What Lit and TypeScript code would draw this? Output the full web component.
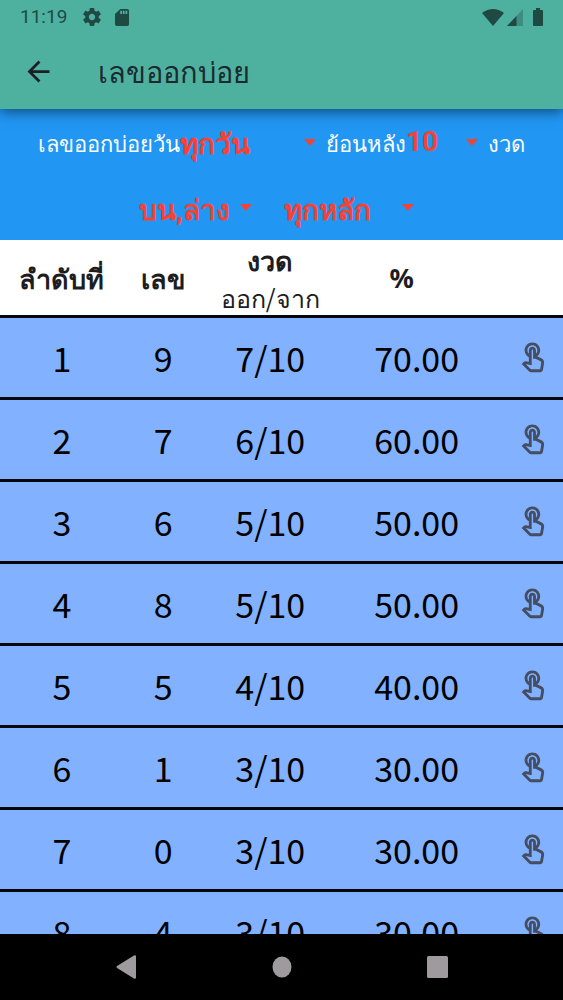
import { LitElement, html, css } from "lit";
import { customElement, property, state } from "lit/decorators.js";

interface Row {
  digit: number;
  hits: number;
  draws: number;
}

const ROWS: Row[] = [
  { digit: 9, hits: 7, draws: 10 },
  { digit: 7, hits: 6, draws: 10 },
  { digit: 6, hits: 5, draws: 10 },
  { digit: 8, hits: 5, draws: 10 },
  { digit: 5, hits: 4, draws: 10 },
  { digit: 1, hits: 3, draws: 10 },
  { digit: 0, hits: 3, draws: 10 },
  { digit: 4, hits: 3, draws: 10 },
];

@customElement("status-bar")
class StatusBar extends LitElement {
  static styles = css`
    :host {
      display: flex;
      align-items: center;
      height: 34px;
      padding: 0 20px;
      color: #1f4a44;
      font: 19px/24px Roboto, sans-serif;
    }
    .time {
      margin-right: 16px;
    }
    .left {
      margin-right: 14px;
    }
    .spacer {
      flex: 1;
    }
    svg {
      display: block;
      fill: currentColor;
    }
    .signal {
      margin: 0 10px 0 3px;
    }
  `;

  render() {
    return html`
      <span class="time">11:19</span>
      <svg class="left" width="18" height="18" viewBox="2 2 20 20" aria-hidden="true">
        <path d="M19.43 12.98c.04-.32.07-.64.07-.98s-.03-.66-.07-.98l2.11-1.65c.19-.15.24-.42.12-.64l-2-3.46c-.12-.22-.39-.3-.61-.22l-2.49 1c-.52-.4-1.08-.73-1.69-.98l-.38-2.65A.49.49 0 0 0 14 2h-4c-.25 0-.46.18-.49.42l-.38 2.65c-.61.25-1.17.59-1.69.98l-2.49-1c-.23-.09-.49 0-.61.22l-2 3.46c-.13.22-.07.49.12.64l2.11 1.65c-.04.32-.07.65-.07.98s.03.66.07.98l-2.11 1.65c-.19.15-.24.42-.12.64l2 3.46c.12.22.39.3.61.22l2.49-1c.52.4 1.08.73 1.69.98l.38 2.65c.03.24.24.42.49.42h4c.25 0 .46-.18.49-.42l.38-2.65c.61-.25 1.17-.59 1.69-.98l2.49 1c.23.09.49 0 .61-.22l2-3.46c.12-.22.07-.49-.12-.64l-2.11-1.65zM12 15.5c-1.93 0-3.5-1.57-3.5-3.5s1.57-3.5 3.5-3.5 3.5 1.57 3.5 3.5-1.57 3.5-3.5 3.5z" />
      </svg>
      <svg width="14" height="17" viewBox="4 2 16 20" preserveAspectRatio="none" aria-hidden="true">
        <path d="M18 2h-8L4.02 8 4 20c0 1.100.9 2 2 2h12c1.100 0 2-.9 2-2V4c0-1.100-.9-2-2-2zm-6 6h-2V4h2v4zm3 0h-2V4h2v4zm3 0h-2V4h2v4z" />
      </svg>
      <span class="spacer"></span>
      <svg width="22" height="17" viewBox="0 0 22 17" aria-hidden="true">
        <path d="M0 4Q11-4 22 4L11 17z" />
      </svg>
      <svg class="signal" width="16" height="17" viewBox="0 0 16 17" aria-hidden="true">
        <path d="M0 17 16 0v17z" opacity=".35" />
        <path d="M0 17 9.500 7v10z" />
      </svg>
      <svg width="10" height="18" viewBox="0 0 10 18" aria-hidden="true">
        <path d="M3 0h4v2h2q1 0 1 1v14q0 1-1 1H1q-1 0-1-1V3q0-1 1-1h2z" />
      </svg>
    `;
  }
}

@customElement("filter-select")
class FilterSelect extends LitElement {
  @property() label = "";
  @property() value = "";
  @property({ type: Array }) options: string[] = [];

  static styles = css`
    :host {
      display: flex;
      align-items: center;
      height: 66px;
    }
    .box {
      flex: 1;
      display: grid;
      grid-template-columns: minmax(0, 1fr) 22px;
      align-items: center;
    }
    select {
      grid-area: 1 / 1 / 2 / 3;
      appearance: none;
      width: 100%;
      height: 56px;
      margin: 0;
      padding: 0;
      border: 0;
      outline: 0;
      background: transparent;
      color: #f44336;
      font: bold 28px/40px Roboto, sans-serif;
      cursor: pointer;
    }
    select:lang(th) {
      padding-top: 6px;
    }
    .arrow {
      grid-area: 1 / 2 / 2 / 3;
      fill: #f44336;
      pointer-events: none;
    }
  `;

  private pick(e: Event) {
    this.value = (e.target as HTMLSelectElement).value;
  }

  render() {
    const lang = /^\d+$/.test(this.value) ? "en" : "th";
    return html`
      <div class="box">
        <select lang=${lang} aria-label=${this.label} @change=${this.pick}>
          ${this.options.map(
            (o) => html`<option ?selected=${o === this.value}>${o}</option>`
          )}
        </select>
        <svg class="arrow" width="12" height="7" viewBox="0 0 12 7" aria-hidden="true">
          <path d="M0 0h12L6 7z" />
        </svg>
      </div>
    `;
  }
}

@customElement("app-root")
class AppRoot extends LitElement {
  @state() private selected = -1;

  static styles = css`
    :host {
      display: flex;
      flex-direction: column;
      height: 100vh;
      overflow: hidden;
      background: #fff;
      color: #1d1d1f;
      font-family: "Noto Sans CJK SC", sans-serif;
    }
    .top {
      position: relative;
      z-index: 1;
      background: #4eb1a0;
      box-shadow: 0 3px 12px rgba(0, 0, 0, 0.5);
    }
    .appbar {
      display: flex;
      align-items: center;
      height: 75px;
      padding: 0 22px;
      gap: 43px;
    }
    .back {
      display: flex;
      margin: 0;
      padding: 0;
      border: 0;
      background: none;
      color: #1b1f26;
      cursor: pointer;
    }
    h1 {
      margin: 0;
      padding-bottom: 4px;
      color: #1b2a2e;
      font-size: 29px;
      line-height: 40px;
      font-weight: 400;
    }
    .filters {
      background: #2196f3;
      color: #fff;
      font-size: 22px;
      line-height: 32px;
    }
    .line {
      display: flex;
      justify-content: center;
      align-items: center;
      height: 66px;
      white-space: nowrap;
    }
    .line + .line {
      height: 65px;
      gap: 22px;
    }
    .day {
      width: 146px;
    }
    .count {
      width: 82px;
    }
    .place {
      width: 123px;
    }
    .digit {
      width: 140px;
    }
    .list {
      flex: 1;
      min-height: 0;
      overflow: hidden;
    }
    table {
      width: 100%;
      table-layout: fixed;
      border-collapse: collapse;
    }
    .c-rank {
      width: 22%;
    }
    .c-num {
      width: 14%;
    }
    .c-hits {
      width: 24%;
    }
    .c-go {
      width: 12%;
    }
    th,
    td {
      padding: 0;
      text-align: center;
      border-bottom: 3px solid #05070d;
    }
    th {
      height: 75px;
      font-size: 27px;
      line-height: 38px;
      font-weight: 700;
    }
    th.pct {
      padding-right: 30px;
      font-family: "Noto Sans", sans-serif;
    }
    .sub {
      display: block;
      font-size: 25px;
      line-height: 36px;
      font-weight: 400;
    }
    td {
      height: 79px;
      background: #82b1ff;
      color: #000;
      font-size: 34px;
      line-height: 48px;
    }
    .go {
      display: block;
      margin: 0 0 0 auto;
      padding: 0 13px 0 0;
      border: 0;
      background: none;
      color: #454d60;
      cursor: pointer;
    }
    .go svg {
      display: block;
      fill: currentColor;
    }
    .nav {
      display: flex;
      justify-content: center;
      align-items: center;
      gap: 124px;
      height: 66px;
      background: #000;
    }
    .nav button {
      display: flex;
      justify-content: center;
      width: 32px;
      margin: 0;
      padding: 0;
      border: 0;
      background: none;
      cursor: pointer;
    }
    .nav svg {
      display: block;
      fill: #9e9a9e;
    }
  `;

  render() {
    return html`
      <header class="top">
        <status-bar></status-bar>
        <div class="appbar">
          <button class="back" aria-label="ย้อนกลับ">
            <svg width="33" height="33" viewBox="0 0 24 24" fill="currentColor" aria-hidden="true">
              <path d="M20 11H7.830l5.590-5.590L12 4l-8 8 8 8 1.410-1.410L7.830 13H20v-2z" />
            </svg>
          </button>
          <h1>เลขออกบ่อย</h1>
        </div>
      </header>
      <section class="filters">
        <div class="line">
          <span>เลขออกบ่อยวัน</span>
          <filter-select class="day" label="วัน" value="ทุกวัน" .options=${["ทุกวัน", "จันทร์", "อังคาร", "พุธ"]}></filter-select>
          <span>ย้อนหลัง</span>
          <filter-select class="count" label="ย้อนหลัง" value="10" .options=${["10", "20", "30"]}></filter-select>
          <span>งวด</span>
        </div>
        <div class="line">
          <filter-select class="place" label="ตำแหน่ง" value="บน,ล่าง" .options=${["บน,ล่าง", "บน", "ล่าง"]}></filter-select>
          <filter-select class="digit" label="หลัก" value="ทุกหลัก" .options=${["ทุกหลัก", "หน่วย", "สิบ"]}></filter-select>
        </div>
      </section>
      <main class="list">
        <table>
          <colgroup>
            <col class="c-rank" />
            <col class="c-num" />
            <col class="c-hits" />
            <col />
            <col class="c-go" />
          </colgroup>
          <thead>
            <tr>
              <th scope="col">ลำดับที่</th>
              <th scope="col">เลข</th>
              <th scope="col">งวด<span class="sub">ออก/จาก</span></th>
              <th scope="col" class="pct">%</th>
              <th></th>
            </tr>
          </thead>
          <tbody>
            ${ROWS.map(
              (r, i) => html`
                <tr>
                  <td>${i + 1}</td>
                  <td>${r.digit}</td>
                  <td>${r.hits}/${r.draws}</td>
                  <td>${((r.hits / r.draws) * 100).toFixed(2)}</td>
                  <td>
                    <button class="go" aria-label="ดูเลข ${r.digit}" @click=${() => (this.selected = i)}>
                      <svg width="34" height="34" viewBox="0 0 24 24" aria-hidden="true">
                        <path d="M18.190,12.440l-3.240-1.620c1.290-1,2.120-2.560,2.120-4.320c0-3.030-2.470-5.500-5.500-5.500s-5.500,2.470-5.500,5.500c0,2.130,1.220,3.980,3,4.890v3.260c-2.150-0.460-2.020-0.440-2.260-0.440c-0.530,0-1.030,0.210-1.410,0.590L4,16.220l5.090,5.090C9.520,21.750,10.120,22,10.740,22h6.300c0.980,0,1.810-0.700,1.970-1.670l0.800-4.710C20.030,14.320,19.380,13.040,18.190,12.440z M17.840,15.290L17.040,20h-6.300c-0.090,0-0.170-0.040-0.240-0.100l-3.680-3.680l4.250,0.890V6.500c0-0.280,0.220-0.500,0.500-0.500c0.280,0,0.500,0.220,0.500,0.500v6h1.760l3.460,1.730C17.690,14.430,17.910,14.860,17.840,15.290z M8.070,6.500c0-1.930,1.570-3.500,3.500-3.500s3.500,1.570,3.500,3.500c0,0.950-0.380,1.810-1,2.440V6.500c0-1.380-1.120-2.500-2.500-2.500c-1.380,0-2.500,1.120-2.500,2.500v2.440C8.450,8.310,8.070,7.450,8.070,6.500z" />
                      </svg>
                    </button>
                  </td>
                </tr>
              `
            )}
          </tbody>
        </table>
      </main>
      <nav class="nav" aria-label="ระบบ">
        <button aria-label="กลับ">
          <svg width="20" height="24" viewBox="0 0 20 24" aria-hidden="true">
            <path d="M18 .5q2-1 2 1v21q0 2-2 1L1 13q-1-1 0-2z" />
          </svg>
        </button>
        <button aria-label="หน้าหลัก">
          <svg width="20" height="22" viewBox="0 0 20 22" aria-hidden="true">
            <ellipse cx="10" cy="11" rx="9.500" ry="10.500" />
          </svg>
        </button>
        <button aria-label="แอปล่าสุด">
          <svg width="21" height="22" viewBox="0 0 21 22" aria-hidden="true">
            <rect width="21" height="22" rx="1.500" />
          </svg>
        </button>
      </nav>
    `;
  }
}
